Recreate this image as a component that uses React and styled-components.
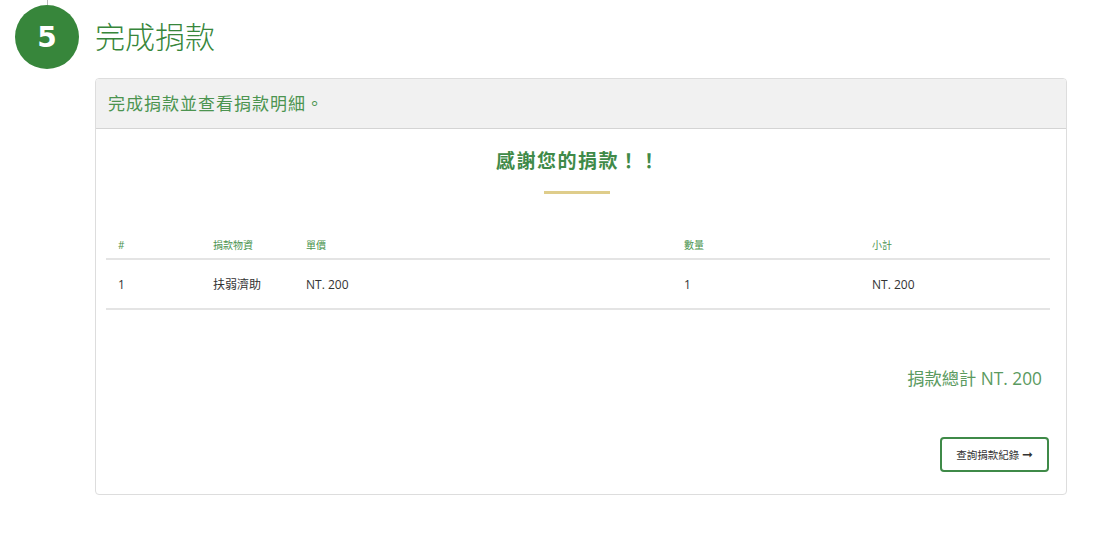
import React from "react";
import styled, { createGlobalStyle } from "styled-components";

const GlobalStyle = createGlobalStyle`
  html, body {
    margin: 0;
    padding: 0;
    background: #fff;
    font-family: "Open Sans", "Noto Sans CJK TC", sans-serif;
  }
  * {
    box-sizing: border-box;
  }
`;

const rows = [{ id: 1, item: "扶弱濟助", price: "NT. 200", qty: 1, subtotal: "NT. 200" }];

export default function App() {
  return (
    <Page>
      <GlobalStyle />
      <StepRow>
        <StepColumn>
          <StepLine />
          <StepBadge>5</StepBadge>
        </StepColumn>
        <StepTitle>完成捐款</StepTitle>
      </StepRow>
      <Card>
        <CardHeader>完成捐款並查看捐款明細。</CardHeader>
        <CardBody>
          <Thanks>感謝您的捐款！！</Thanks>
          <GoldBar />
          <DonationTable>
            <colgroup>
              <col style={{ width: 95 }} />
              <col style={{ width: 93 }} />
              <col style={{ width: 378 }} />
              <col style={{ width: 188 }} />
              <col style={{ width: 190 }} />
            </colgroup>
            <thead>
              <tr>
                <th>#</th>
                <th>捐款物資</th>
                <th>單價</th>
                <th>數量</th>
                <th>小計</th>
              </tr>
            </thead>
            <tbody>
              {rows.map((row) => (
                <tr key={row.id}>
                  <td>{row.id}</td>
                  <td>{row.item}</td>
                  <td>{row.price}</td>
                  <td>{row.qty}</td>
                  <td>{row.subtotal}</td>
                </tr>
              ))}
            </tbody>
          </DonationTable>
          <Total>捐款總計 NT. 200</Total>
          <Actions>
            <RecordButton type="button">查詢捐款紀錄 <Arrow>➞</Arrow></RecordButton>
          </Actions>
        </CardBody>
      </Card>
    </Page>
  );
}

const Page = styled.div`
  width: 1110px;
  height: 540px;
  overflow: hidden;
  padding: 0 43px 0 15px;
`;

const StepRow = styled.div`
  display: flex;
  align-items: flex-start;
  gap: 16px;
  height: 78px;
`;

const StepColumn = styled.div`
  display: flex;
  flex-direction: column;
  align-items: center;
  width: 64px;
`;

const StepLine = styled.div`
  width: 1px;
  height: 5px;
  background: #bbb;
`;

const StepBadge = styled.div`
  width: 64px;
  height: 64px;
  border-radius: 50%;
  background: #37863b;
  color: #fff;
  display: flex;
  align-items: center;
  justify-content: center;
  font-family: "DejaVu Sans", sans-serif;
  font-weight: 700;
  font-size: 28px;
`;

const StepTitle = styled.h2`
  margin: 15px 0 0;
  font-size: 30px;
  line-height: 44px;
  font-weight: 300;
  color: #37863b;
`;

const Card = styled.section`
  margin-left: 80px;
  width: 972px;
  height: 417px;
  border: 1px solid #ddd;
  border-radius: 4px;
  overflow: hidden;
`;

const CardHeader = styled.div`
  height: 50px;
  padding: 0 0 2px 12px;
  display: flex;
  align-items: center;
  background: #f1f1f1;
  border-bottom: 1px solid #d4d4d4;
  color: #4c9450;
  font-size: 17px;
  letter-spacing: 1px;
`;

const CardBody = styled.div`
  padding: 18px 16px 0 10px;
  display: flex;
  flex-direction: column;
`;

const Thanks = styled.h3`
  margin: 0;
  text-align: center;
  font-size: 19px;
  line-height: 28px;
  font-weight: 700;
  letter-spacing: 1.5px;
  color: #3f8a48;
`;

const GoldBar = styled.div`
  align-self: center;
  width: 66px;
  height: 3px;
  margin: 16px 2px 0 0;
  background: #dfcd8b;
`;

const DonationTable = styled.table`
  width: 944px;
  margin-top: 37px;
  border-collapse: collapse;
  table-layout: fixed;

  th {
    height: 28px;
    padding: 0 12px;
    text-align: left;
    font-size: 10px;
    font-weight: 400;
    color: #4c9450;
    border-bottom: 2px solid #e4e4e4;
  }

  td {
    height: 50px;
    padding: 0 12px;
    font-size: 12px;
    color: #333;
    border-bottom: 2px solid #e4e4e4;
  }
`;

const Total = styled.div`
  margin-top: 56px;
  padding-right: 8px;
  text-align: right;
  font-size: 17.3px;
  line-height: 26px;
  font-weight: 400;
  color: #5a9a60;
`;

const Actions = styled.div`
  display: flex;
  justify-content: flex-end;
  margin-top: 45px;
  padding-right: 1px;
`;

const RecordButton = styled.button`
  width: 109px;
  height: 35px;
  padding: 0;
  background: #fff;
  border: 2px solid #3f8a48;
  border-radius: 4px;
  color: #333;
  font-family: inherit;
  font-size: 10.5px;
`;

const Arrow = styled.span`
  font-family: "DejaVu Sans", sans-serif;
  font-size: 13px;
`;
